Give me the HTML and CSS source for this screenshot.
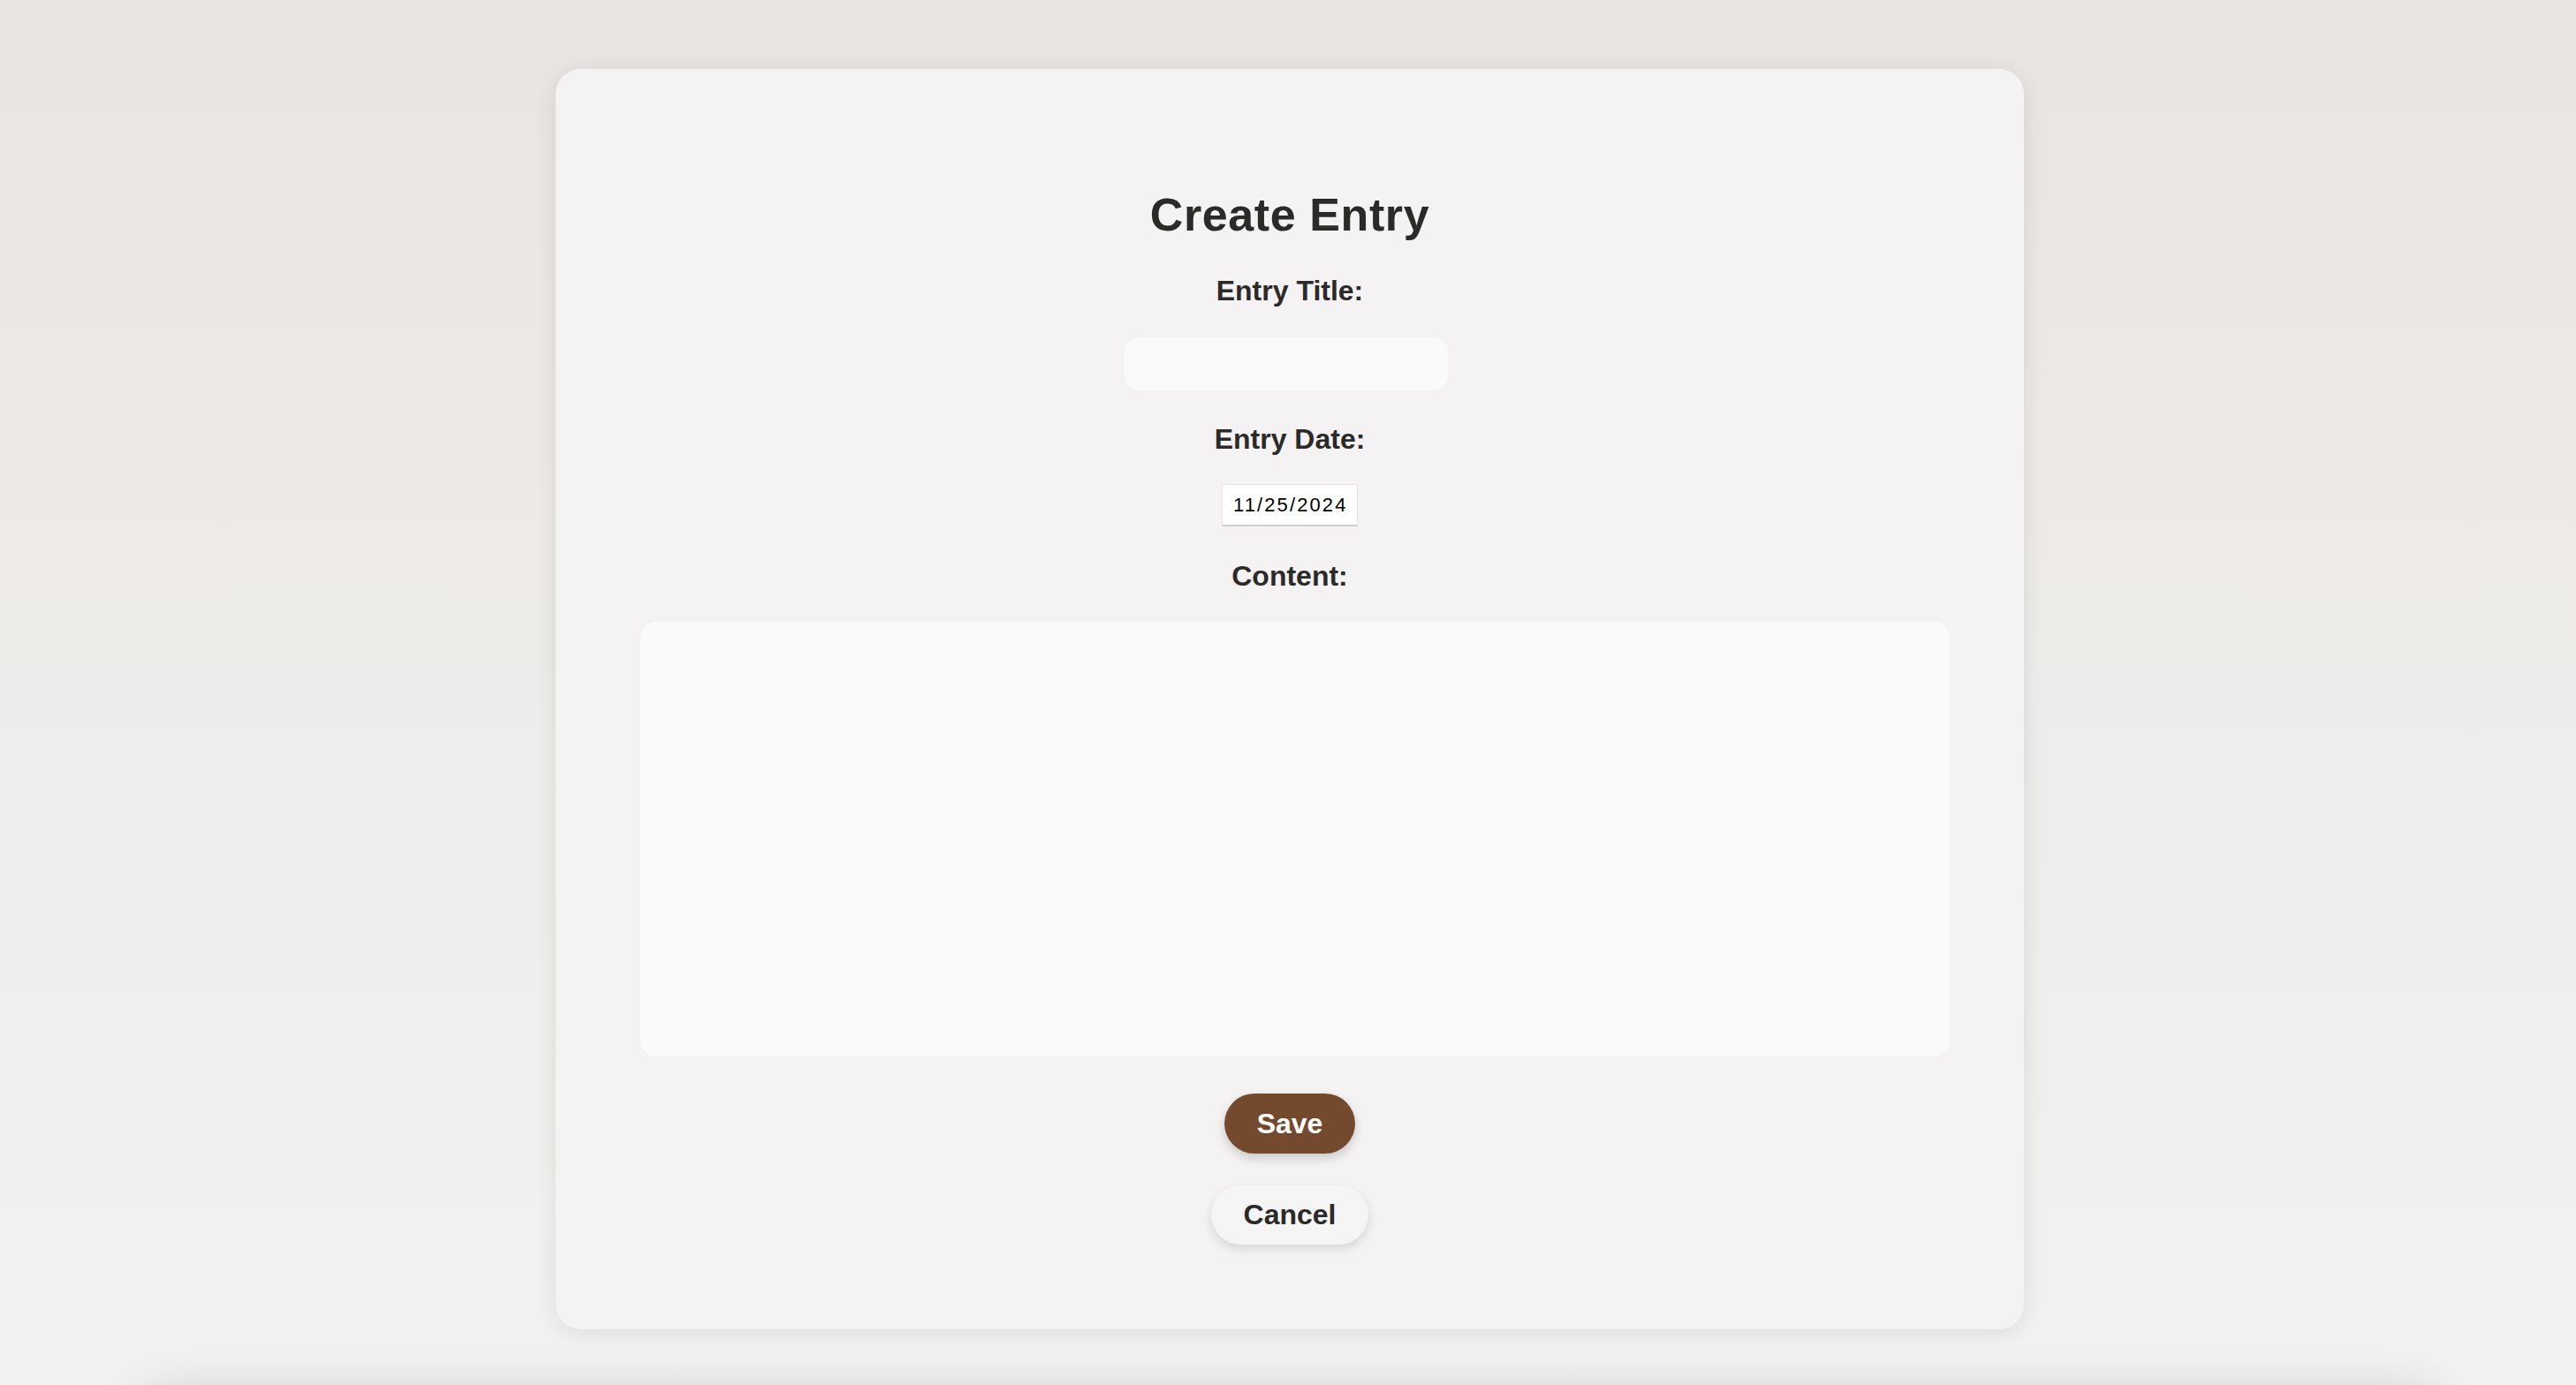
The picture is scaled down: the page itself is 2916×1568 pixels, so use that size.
FILE: index.html
```html
<!DOCTYPE html>
<html lang="en">
<head>
<meta charset="utf-8">
<title>Create Entry</title>
<link rel="stylesheet" href="styles.css">
</head>
<body>
<div class="page">
  <form class="card">
    <h2 class="title">Create Entry</h2>
    <label class="label" for="t">Entry Title:</label>
    <input class="title-input" id="t" type="text">
    <label class="label" for="d">Entry Date:</label>
    <input class="date-input" id="d" type="text" value="11/25/2024">
    <label class="label label-content" for="c">Content:</label>
    <textarea class="content" id="c"></textarea>
    <button class="btn btn-save" type="button">Save</button>
    <button class="btn btn-cancel" type="button">Cancel</button>
  </form>
  <div class="next-panel"></div>
</div>
</body>
</html>
```

FILE: styles.css
```css
html, body {
  margin: 0;
  padding: 0;
}
body {
  font-family: "Liberation Sans", Arial, Helvetica, sans-serif;
  color: #2b2a28;
  background: linear-gradient(to bottom, #e8e4e1 0px, #efedeb 900px, #f3f1f1 1568px);
  min-height: 1568px;
  overflow: hidden;
}
.page {
  padding: 78px 0 0 4px;
}
.card {
  box-sizing: border-box;
  width: 1662px;
  margin: 0 auto;
  padding: 134px 96px 96px;
  background: #f4f2f3;
  border-radius: 28px;
  box-shadow: 0 4px 26px rgba(0, 0, 0, 0.09);
  display: flex;
  flex-direction: column;
  align-items: center;
}
.title {
  margin: 0 0 35px;
  font-size: 52px;
  line-height: 62px;
  font-weight: 700;
  letter-spacing: 0.6px;
}
.label {
  display: block;
  font-size: 32px;
  line-height: 40px;
  font-weight: 700;
  margin-bottom: 33px;
}
.title-input {
  box-sizing: border-box;
  width: 366px;
  height: 60px;
  margin: 0 8px 35px 0;
  border: none;
  border-radius: 16px;
  background: #fafafa;
  outline: none;
  padding: 0 16px;
  font-family: inherit;
  font-size: 28px;
}
.date-input {
  box-sizing: border-box;
  width: 154px;
  height: 48px;
  margin: -2px 0 36px;
  border: 1px solid #e2e2e2;
  border-bottom: 2px solid #cfcfcf;
  background: #ffffff;
  padding: 0 0 0 12px;
  font-family: "Liberation Sans", Arial, sans-serif;
  font-size: 22px;
  letter-spacing: 2.1px;
  color: #000;
  outline: none;
}
.label-content {
  margin-bottom: 32px;
}
.content {
  box-sizing: border-box;
  align-self: flex-start;
  width: calc(100% + 12px);
  height: 492px;
  margin: 0 0 42px;
  border: none;
  border-radius: 18px;
  background: #fafafa;
  resize: none;
  outline: none;
  padding: 16px;
  font-family: inherit;
  font-size: 28px;
}
.btn {
  height: 68px;
  padding: 0 37px;
  border: none;
  border-radius: 34px;
  font-family: "Liberation Sans", Arial, sans-serif;
  font-size: 32px;
  font-weight: 700;
  line-height: 68px;
  cursor: pointer;
}
.btn-save {
  background: #744a2f;
  color: #ffffff;
  margin-bottom: 36px;
  box-shadow: 0 5px 12px rgba(0, 0, 0, 0.18);
}
.btn-cancel {
  background: #f6f5f5;
  color: #2b2a28;
  height: 67px;
  line-height: 67px;
  box-shadow: 0 5px 12px rgba(0, 0, 0, 0.12);
}
.next-panel {
  width: 2600px;
  height: 300px;
  margin: 76px auto 0;
  background: #f4f2f3;
  border-radius: 28px;
  box-shadow: 0 0 60px rgba(0, 0, 0, 0.18);
}
```
